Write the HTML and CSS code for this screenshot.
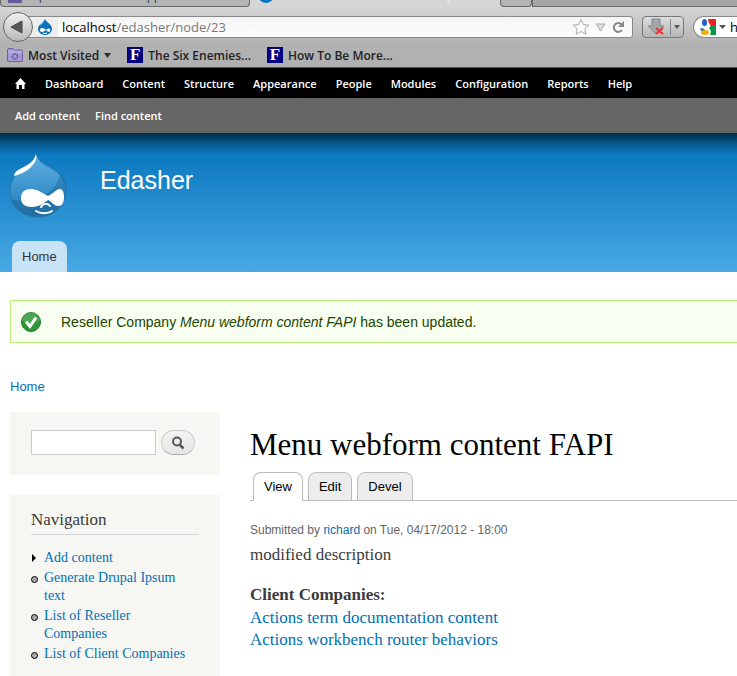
FILE: index.html
```html
<!DOCTYPE html>
<html lang="en">
<head>
  <meta charset="UTF-8">
  <meta name="viewport" content="width=device-width, initial-scale=1.0">
  <title>Menu webform content FAPI | Edasher</title>
  <link rel="stylesheet" href="styles.css">
</head>
<body>

  <div class="browser">
    <div class="tab-strip">
      <div class="browser-tab"><span class="tab-icon"></span><span class="tab-text">Upload Wilcox - Netapp for Mam...</span></div>
      <div class="browser-tab current">
        <svg class="tab-drop" width="16" height="16" viewBox="0 0 16 16"><path d="M8 0C9 3 15 5 15 10a7 6 0 0 1-14 0C1 5 7 4 8 0Z" fill="#0b73b9"/><path d="M3 11c0-3 4-2 6 0 3-3 5-1 4 1s-3 0-4-1c-2 2-6 3-6 0Z" fill="#fff"/></svg>
        <span class="tab-text">Menu webform content FAPI | Eda...</span>
      </div>
      <div class="browser-tab new-tab"><span class="tab-text">+</span></div>
      <div class="tab-rest"></div>
    </div>

    <div class="location-bar">
      <button class="back" aria-label="Back">
        <svg width="30" height="30" viewBox="0 0 30 30"><path d="M8 15 19 9v12Z" fill="#555" stroke="#444"/></svg>
      </button>
      <div class="url-box">
        <span class="site-icon">
          <svg width="16" height="16" viewBox="0 0 16 16"><path d="M8 0C9 3 15 5 15 10a7 6 0 0 1-14 0C1 5 7 4 8 0Z" fill="#0b73b9"/><path d="M4 4l3-2-2 3-2 2Z" fill="#9cf"/><path d="M3 11c0-3 4-2 6 0 3-3 5-1 4 1s-3 0-4-1c-2 2-6 3-6 0Z" fill="#fff"/><path d="M6 14q2 1 4 0" stroke="#fff" fill="none"/></svg>
        </span>
        <span class="url">localhost<span class="path">/edasher/node/23</span></span>
        <svg class="url-tools" width="54" height="18" viewBox="0 0 54 18">
          <path d="M9 1.500l2.300 5 5.500.6-4 3.700 1.100 5.500L9 13.500l-4.900 2.800 1.100-5.500-4-3.700 5.500-.6Z" fill="#fafafa" stroke="#aaa"/>
          <path d="M24 6h9l-4.500 7Z" fill="#ddd" stroke="#aaa"/>
          <path d="M49.500 6.200A4.500 4.500 0 1 0 50 12" fill="none" stroke="#888" stroke-width="2"/><path d="M52 3v6h-6Z" fill="#888"/>
        </svg>
      </div>
      <button class="download" aria-label="Downloads">
        <svg width="40" height="20" viewBox="0 0 40 20">
          <path d="M9 2h8v7h4l-8 8-8-8h4Z" fill="#a2a5aa" stroke="#85888c"/>
          <path d="M13 11l7 6M20 11l-7 6" stroke="#e33" stroke-width="2"/>
          <path d="M27.500 2v16" stroke="#888"/><path d="M31 8h6l-3 4Z" fill="#555"/>
        </svg>
      </button>
      <div class="search-engine">
        <svg width="26" height="16" viewBox="0 0 26 16">
          <path d="M8 0h8v6H9Z" fill="#e22"/><path d="M8 6h8v10H8Z" fill="#079548"/>
          <path d="M6 4h3q3 3 0 5 3 3 1 7H5L1 9Z" fill="#fff"/>
          <ellipse cx="4.500" cy="3.500" rx="2.500" ry="3.500" fill="#1765c8"/><path d="M0 9l5 1-3 3Z" fill="#1765c8"/><ellipse cx="5" cy="13.500" rx="4" ry="2.500" fill="#efac13"/>
          <path d="M19 6h7l-3.500 4Z" fill="#555"/>
        </svg>
        <input class="engine-input" type="text" aria-label="Search the web" value="how">
      </div>
    </div>

    <div class="bookmarks">
      <a class="bookmark" href="#">
        <svg width="16" height="14" viewBox="0 0 16 14"><path d="M.5 2Q.5.5 2 .5h4L7.500 2H14q1.500 0 1.500 1.500V12q0 1.500-1.500 1.500H2Q.5 13.500.5 12Z" fill="#a79bd6" stroke="#6d60a6"/><path d="M1 4h14" stroke="#c9c0ec"/><circle cx="8" cy="8.500" r="2.500" fill="none" stroke="#6759a6" stroke-width="2" stroke-dasharray="1.500 .7"/></svg>
        Most Visited
        <svg width="7" height="5" viewBox="0 0 7 5"><path d="M0 0h7L3.500 5Z" fill="#333"/></svg>
      </a>
      <a class="bookmark" href="#"><span class="f-icon">F</span>The Six Enemies...</a>
      <a class="bookmark" href="#"><span class="f-icon">F</span>How To Be More...</a>
    </div>
  </div>

  <nav class="admin-menu">
    <a href="#" aria-label="Home"><svg width="11" height="11" viewBox="0 0 11 11"><path d="M5.500 0 11 6H9.500v5H7V7H4v4H1.500V6H0Z" fill="#fff"/></svg></a>
    <a href="#">Dashboard</a>
    <a href="#">Content</a>
    <a href="#">Structure</a>
    <a href="#">Appearance</a>
    <a href="#">People</a>
    <a href="#">Modules</a>
    <a href="#">Configuration</a>
    <a href="#">Reports</a>
    <a href="#">Help</a>
  </nav>
  <div class="shortcuts">
    <a href="#">Add content</a>
    <a href="#">Find content</a>
  </div>

  <header class="header">
    <div class="branding">
      <svg class="logo" width="58" height="66" viewBox="0 0 58 66">
        <defs>
          <linearGradient id="drop" x1="0" y1="0" x2="0" y2="1"><stop offset="0" stop-color="#5fb0e2"/><stop offset=".6" stop-color="#3990ca"/><stop offset="1" stop-color="#226fa5"/></linearGradient>
        </defs>
        <path d="M27 1c2 7 8 10 15 14 9 5 15 12 15 22 0 17-13 27-28 27S1 54 1 38c0-9 4-16 12-21C20 13 25 9 27 1Z" fill="url(#drop)" stroke="#2874a8"/>
        <path d="M51 20c8 8 7 22 2 29-9 14-29 17-42 9-5-3-8-8-9-12 22 6 47-6 49-26Z" fill="#1b669b" opacity=".45"/>
        <path d="M27 1c1 4 0 6-1 8-5 8-13 12-21 14 0-3 2-5 6-7 8-4 14-7 16-15Z" fill="#fff"/>
        <path d="M12 45c0-6 4-9 10-9 7 0 11 4 17 7 5-2 8-7 12-7 3 0 4 4 4 8 0 6-2 9-6 9-4 0-7-5-10-6-4 3-9 7-16 7-7 0-11-3-11-9Z" fill="#fff"/>
        <path d="M32 54c2-4 7-4 9-1M27 58c4 3 12 3 16 0" fill="none" stroke="#fff" stroke-width="2" stroke-linecap="round"/>
      </svg>
      <a class="site-name" href="#">Edasher</a>
    </div>
    <nav class="main-menu"><a href="#">Home</a></nav>
  </header>

  <div class="messages">
    <svg width="20" height="20" viewBox="0 0 20 20"><circle cx="10" cy="10" r="9.500" fill="#2e9636" stroke="#237b2c"/><path d="M1.500 9a8.500 8.500 0 0 1 17 0Q10 13 1.500 9Z" fill="#60b466" opacity=".6"/><path d="M5 9.500l4 5 6-9" fill="none" stroke="#fff" stroke-width="3"/></svg>
    <p>Reseller Company <em>Menu webform content FAPI</em> has been updated.</p>
  </div>

  <div class="breadcrumb"><a href="#">Home</a></div>

  <div class="main">
    <aside class="sidebar">
      <form class="block search-form">
        <input class="search-input" type="text" aria-label="Search">
        <button class="search-button" type="button" aria-label="Search">
          <svg width="14" height="14" viewBox="0 0 14 14"><circle cx="6" cy="5.500" r="4" fill="none" stroke="#555" stroke-width="2"/><path d="M9 9l3.500 3.500" stroke="#555" stroke-width="2.500"/></svg>
        </button>
      </form>
      <div class="block navigation">
        <h2>Navigation</h2>
        <ul>
          <li class="collapsed"><a href="#">Add content</a></li>
          <li><a href="#">Generate Drupal Ipsum text</a></li>
          <li><a href="#">List of Reseller Companies</a></li>
          <li><a href="#">List of Client Companies</a></li>
        </ul>
      </div>
    </aside>

    <main class="content">
      <h1>Menu webform content FAPI</h1>
      <nav class="tabs">
        <a class="active" href="#">View</a>
        <a href="#">Edit</a>
        <a href="#">Devel</a>
      </nav>
      <p class="submitted">Submitted by <a href="#">richard</a> on Tue, 04/17/2012 - 18:00</p>
      <p class="description">modified description</p>
      <h3>Client Companies:</h3>
      <div class="companies">
        <a href="#">Actions term documentation content</a>
        <a href="#">Actions workbench router behaviors</a>
      </div>
    </main>
  </div>

</body>
</html>
```
FILE: styles.css
```css
* {
  box-sizing: border-box;
}

body {
  margin: 0;
  background-color: #fff;
  color: #3b3b3b;
  font-family: "Liberation Serif", serif;
  font-size: 17px;
  overflow: hidden;
}

a {
  color: #0071b3;
  text-decoration: none;
}

h1, h2, h3, p, ul {
  margin: 0;
  padding: 0;
  font-weight: normal;
}

button, input {
  margin: 0;
  padding: 0;
}

svg {
  flex: none;
}

/* browser window */
.browser {
  height: 68px;
  background: linear-gradient(#d6d6d6 7px, #b2b2b2 44px, #b0b0b0);
  border-bottom: 1px solid #555;
  font-family: "Open Sans", sans-serif;
  overflow: hidden;
}

.tab-strip {
  display: flex;
  height: 7px;
  background-color: #d6d6d6;
  overflow: hidden;
}

.browser-tab {
  display: flex;
  align-items: flex-end;
  gap: 8px;
  flex: none;
  width: 250px;
  height: 7px;
  padding: 0 7px 3px;
  background-color: #b4b4b4;
  border: 1px solid #666;
  border-top: none;
  border-radius: 0 0 4px 4px;
  overflow: hidden;
  color: #333;
  font-size: 12px;
  line-height: 14px;
  white-space: nowrap;
}

.browser-tab.current {
  background-color: #d6d6d6;
  border-color: #d6d6d6;
  color: #f4f4f4;
}

.browser-tab.new-tab {
  width: 32px;
}

.tab-icon {
  width: 14px;
  height: 8px;
  background-color: #655b9b;
}

.tab-rest {
  flex: 1;
  background-color: #a5a5a5;
  border-bottom: 1px solid #666;
  border-left: 1px solid #666;
}

.location-bar {
  display: flex;
  align-items: center;
  height: 40px;
  padding-left: 3px;
}

.back {
  position: relative;
  z-index: 1;
  flex: none;
  width: 30px;
  height: 30px;
  border: 1px solid #666;
  border-radius: 50%;
  background: linear-gradient(#f0f0f0, #b8b8b8);
}

.back svg {
  display: block;
  margin: -1px;
}

.url-box {
  display: flex;
  align-items: center;
  flex: 1;
  height: 22px;
  margin-left: -6px;
  border: 1px solid #888;
  border-radius: 0 3px 3px 0;
  background: linear-gradient(#f4f4f4, #fff);
}

.site-icon {
  display: flex;
  align-items: center;
  width: 30px;
  height: 20px;
  padding-left: 9px;
  background-color: #eee;
}

.url {
  flex: 1;
  padding-left: 4px;
  color: #000;
  font-size: 13px;
}

.path {
  color: #777;
}

.url-tools {
  margin-right: 6px;
}

.download {
  flex: none;
  width: 42px;
  height: 22px;
  margin: 0 9px;
  border: 1px solid #777;
  border-radius: 4px;
  background: linear-gradient(#ddd, #b5b5b5);
}

.download svg {
  display: block;
}

.search-engine {
  display: flex;
  align-items: center;
  gap: 4px;
  flex: none;
  width: 44px;
  height: 22px;
  padding-left: 6px;
  border: 1px solid #888;
  border-right: none;
  border-radius: 11px 0 0 11px;
  background-color: #fff;
  overflow: hidden;
}

.engine-input {
  width: 60px;
  border: none;
  background: none;
  font-family: "Open Sans", sans-serif;
  font-size: 13px;
}

.bookmarks {
  display: flex;
  align-items: center;
  gap: 16px;
  height: 16px;
  padding-left: 7px;
}

.bookmark {
  display: flex;
  align-items: center;
  gap: 5px;
  color: #222;
  font-size: 12px;
  font-weight: 600;
}

.f-icon {
  width: 16px;
  height: 16px;
  background-color: #000080;
  color: #fff;
  font-family: "Liberation Serif", serif;
  font-size: 17px;
  font-weight: bold;
  line-height: 16px;
  text-align: center;
}

/* admin toolbar */
.admin-menu,
.shortcuts {
  display: flex;
  align-items: center;
  font-family: "Open Sans", sans-serif;
  font-size: 11px;
  font-weight: 600;
}

.admin-menu {
  gap: 19px;
  height: 30px;
  padding-left: 15px;
  background-color: #000;
}

.shortcuts {
  gap: 15px;
  height: 35px;
  padding-left: 15px;
  background-color: #666;
}

.admin-menu a,
.shortcuts a {
  color: #fff;
}

.admin-menu svg {
  display: block;
}

/* site header */
.header {
  display: flex;
  flex-direction: column;
  justify-content: space-between;
  height: 139px;
  padding: 20px 12px 0 9px;
  background: linear-gradient(#002a44, #07578c 10px, #0c79c0 22px, #48a9e4);
  font-family: "Liberation Sans", sans-serif;
}

.branding {
  display: flex;
  gap: 33px;
}

.site-name {
  padding-top: 12px;
  color: #fff;
  font-size: 25px;
  line-height: 30px;
}

.main-menu {
  display: flex;
  padding-left: 3px;
}

.main-menu a {
  padding: 0 10px;
  border-radius: 8px 8px 0 0;
  background-color: #c8e3f5;
  color: #333;
  font-size: 13px;
  line-height: 31px;
}

.messages {
  display: flex;
  align-items: center;
  gap: 20px;
  height: 43px;
  margin: 28px 0 0 10px;
  padding-left: 10px;
  border: 1px solid #be7;
  border-right: none;
  background-color: #f8fff0;
  color: #234600;
  font-family: "Liberation Sans", sans-serif;
  font-size: 14px;
}

.breadcrumb {
  padding: 34px 10px 15px;
  font-family: "Liberation Sans", sans-serif;
  font-size: 13px;
  line-height: 20px;
}

.main {
  display: flex;
  gap: 30px;
  padding-left: 10px;
}

.sidebar {
  flex: none;
  width: 210px;
}

.block {
  padding: 15px 21px;
  background-color: #f6f6f2;
}

.search-form {
  display: flex;
  gap: 5px;
  height: 63px;
  padding-top: 18px;
  margin-bottom: 20px;
}

.search-input {
  width: 125px;
  height: 25px;
  border: 1px solid #ccc;
}

.search-button {
  display: flex;
  align-items: center;
  justify-content: center;
  width: 34px;
  height: 25px;
  border: 1px solid #ccc;
  border-bottom-color: #aaa;
  border-radius: 13px;
  background: linear-gradient(#f3f3f3, #e6e6e6);
}

.navigation h2 {
  padding-bottom: 5px;
  margin-bottom: 14px;
  border-bottom: 1px solid #d6d6d6;
  font-size: 17px;
  line-height: 19px;
}

.navigation ul {
  list-style: none;
}

.navigation li {
  position: relative;
  padding: 0 10px 2px 13px;
  font-size: 14px;
  line-height: 18px;
}

.navigation li::before {
  content: "";
  position: absolute;
  top: 7px;
  left: 0;
  width: 5px;
  height: 5px;
  border: 1px solid #000;
  border-radius: 50%;
  background-color: #aaa;
}

.navigation li.collapsed::before {
  top: 5px;
  left: 1px;
  width: 0;
  height: 0;
  border: 4px solid transparent;
  border-left-color: #000;
  border-right: none;
  border-radius: 0;
  background: none;
}

.content {
  flex: 1;
  min-width: 0;
}

.content h1 {
  padding-top: 15px;
  color: #000;
  font-size: 31px;
  line-height: 36px;
}

.tabs {
  display: flex;
  gap: 5px;
  height: 29px;
  margin-top: 9px;
  padding-left: 3px;
  border-bottom: 1px solid #bbb;
  font-family: "Liberation Sans", sans-serif;
  font-size: 13px;
}

.tabs a {
  height: 29px;
  padding: 0 10px;
  border: 1px solid #bbb;
  border-radius: 8px 8px 0 0;
  background-color: #ededed;
  color: #000;
  line-height: 27px;
}

.tabs a.active {
  border-bottom-color: #fff;
  background-color: #fff;
}

.submitted {
  margin-top: 20px;
  color: #656565;
  font-family: "Liberation Sans", sans-serif;
  font-size: 12px;
  line-height: 18px;
}

.description {
  margin-top: 4px;
  line-height: 24px;
}

.content h3 {
  margin-top: 16px;
  font-size: 17px;
  font-weight: bold;
  line-height: 24px;
}

.companies {
  display: flex;
  flex-direction: column;
  line-height: 22px;
}
```
